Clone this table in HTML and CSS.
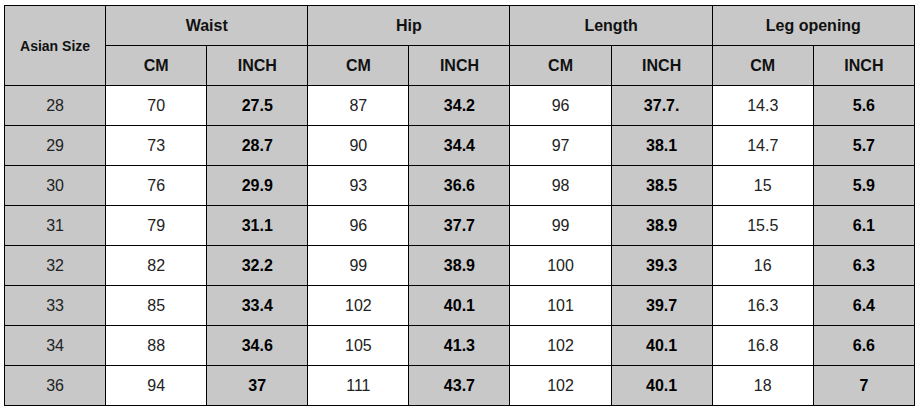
FILE: index.html
```html
<!DOCTYPE html>
<html>
<head>
<meta charset="utf-8">
<link rel="stylesheet" href="styles.css">
</head>
<body>
<table class="size-table">
  <colgroup>
    <col class="c"><col class="c"><col class="c"><col class="c"><col class="c"><col class="c"><col class="c"><col class="c"><col class="c">
  </colgroup>
  <thead>
    <tr>
      <th rowspan="2" class="size-head">Asian Size</th>
      <th colspan="2">Waist</th>
      <th colspan="2">Hip</th>
      <th colspan="2">Length</th>
      <th colspan="2">Leg opening</th>
    </tr>
    <tr>
      <th>CM</th><th>INCH</th>
      <th>CM</th><th>INCH</th>
      <th>CM</th><th>INCH</th>
      <th>CM</th><th>INCH</th>
    </tr>
  </thead>
  <tbody>
    <tr><td class="size">28</td><td class="cm">70</td><td class="inch">27.5</td><td class="cm">87</td><td class="inch">34.2</td><td class="cm">96</td><td class="inch">37.7.</td><td class="cm">14.3</td><td class="inch">5.6</td></tr>
    <tr><td class="size">29</td><td class="cm">73</td><td class="inch">28.7</td><td class="cm">90</td><td class="inch">34.4</td><td class="cm">97</td><td class="inch">38.1</td><td class="cm">14.7</td><td class="inch">5.7</td></tr>
    <tr><td class="size">30</td><td class="cm">76</td><td class="inch">29.9</td><td class="cm">93</td><td class="inch">36.6</td><td class="cm">98</td><td class="inch">38.5</td><td class="cm">15</td><td class="inch">5.9</td></tr>
    <tr><td class="size">31</td><td class="cm">79</td><td class="inch">31.1</td><td class="cm">96</td><td class="inch">37.7</td><td class="cm">99</td><td class="inch">38.9</td><td class="cm">15.5</td><td class="inch">6.1</td></tr>
    <tr><td class="size">32</td><td class="cm">82</td><td class="inch">32.2</td><td class="cm">99</td><td class="inch">38.9</td><td class="cm">100</td><td class="inch">39.3</td><td class="cm">16</td><td class="inch">6.3</td></tr>
    <tr><td class="size">33</td><td class="cm">85</td><td class="inch">33.4</td><td class="cm">102</td><td class="inch">40.1</td><td class="cm">101</td><td class="inch">39.7</td><td class="cm">16.3</td><td class="inch">6.4</td></tr>
    <tr><td class="size">34</td><td class="cm">88</td><td class="inch">34.6</td><td class="cm">105</td><td class="inch">41.3</td><td class="cm">102</td><td class="inch">40.1</td><td class="cm">16.8</td><td class="inch">6.6</td></tr>
    <tr><td class="size">36</td><td class="cm">94</td><td class="inch">37</td><td class="cm">111</td><td class="inch">43.7</td><td class="cm">102</td><td class="inch">40.1</td><td class="cm">18</td><td class="inch">7</td></tr>
  </tbody>
</table>
</body>
</html>
```
FILE: styles.css
```css
html, body {
  margin: 0;
  padding: 0;
  background: #ffffff;
}
body {
  padding: 5px 0 0 4px;
  font-family: "Liberation Sans", Arial, sans-serif;
}
.size-table {
  border-collapse: collapse;
  table-layout: fixed;
  width: 911px;
}
.size-table .c {
  width: 101px;
}
.size-table th,
.size-table td {
  border: 1.5px solid #000;
  height: 39px;
  padding: 0;
  text-align: center;
  vertical-align: middle;
  font-size: 16px;
  line-height: 18px;
}
.size-table th {
  background: #c8c8c8;
  color: #111;
  font-weight: bold;
}
.size-table th.size-head {
  font-size: 14px;
}
.size-table td.size {
  background: #c8c8c8;
  color: #222;
  font-weight: normal;
}
.size-table td.cm {
  background: #ffffff;
  color: #222;
}
.size-table td.inch {
  background: #c8c8c8;
  color: #000;
  font-weight: bold;
}
```
